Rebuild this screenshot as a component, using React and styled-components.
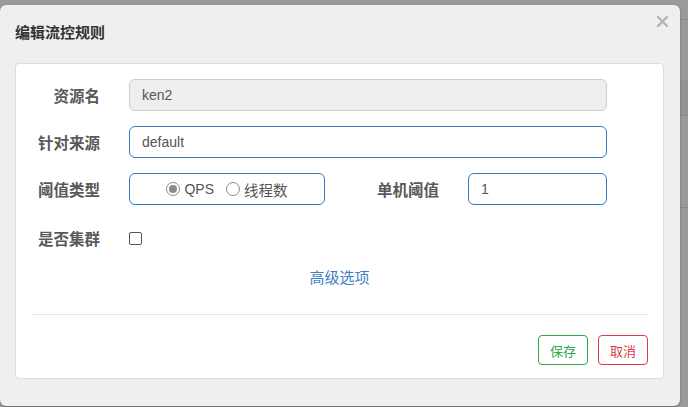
import React from 'react'
import styled, { createGlobalStyle } from 'styled-components'

const GlobalStyle = createGlobalStyle`
  html, body {
    margin: 0;
    padding: 0;
  }
  body {
    width: 688px;
    height: 407px;
    overflow: hidden;
    font-family: "Liberation Sans", "Noto Sans CJK SC", sans-serif;
    font-size: 14px;
    color: #555;
    background:
      linear-gradient(#8a8a8a, #8a8a8a) 0 19px / 100% 1px no-repeat,
      linear-gradient(#939393, #939393) 0 80px / 100% 35px no-repeat,
      linear-gradient(#8a8a8a, #8a8a8a) 0 115px / 100% 1px no-repeat,
      linear-gradient(#8a8a8a, #8a8a8a) 0 207px / 100% 1px no-repeat,
      #9a9a9a;
  }
`

function App() {
  return (
    <Backdrop>
      <GlobalStyle />
      <Dialog>
        <Header>
          <Title>编辑流控规则</Title>
          <Close aria-label="close">
            <svg width="11" height="11" viewBox="0 0 11 11">
              <path d="M1 1L10 10M10 1L1 10" stroke="#b3b3b3" strokeWidth="2.4" strokeLinecap="round" />
            </svg>
          </Close>
        </Header>

        <Panel>
          <Form>
            <Row>
              <Label>资源名</Label>
              <Input disabled value="ken2" readOnly />
            </Row>
            <Row>
              <Label>针对来源</Label>
              <Input value="default" readOnly />
            </Row>
            <Row $split>
              <Label>阈值类型</Label>
              <RadioBox>
                <RadioItem>
                  <Radio $checked />
                  QPS
                </RadioItem>
                <RadioItem>
                  <Radio />
                  <Cjk>线程数</Cjk>
                </RadioItem>
              </RadioBox>
              <Label>单机阈值</Label>
              <Input value="1" readOnly />
            </Row>
            <Row $check>
              <Label>是否集群</Label>
              <Checkbox />
            </Row>
            <MoreLink>高级选项</MoreLink>
          </Form>

          <Divider />

          <Footer>
            <Button $color="#2ea84a">保存</Button>
            <Button $color="#e03a4c">取消</Button>
          </Footer>
        </Panel>
      </Dialog>
    </Backdrop>
  )
}

export default App

const Backdrop = styled.div`
     padding-top: 5px;
`

const Dialog = styled.div`
     width: 680px;
     height: 401px;
     box-sizing: border-box;
     background: #efefef;
     border-radius: 6px;
     box-shadow: 0 1px 2px rgba(0,0,0,0.35);
     padding: 0 16px 0 15px;
`

const Header = styled.div`
     height: 58px;
     display: flex;
     justify-content: space-between;
     align-items: flex-start;
`

const Title = styled.h4`
     margin: 17px 0 0 0;
     font-size: 15px;
     line-height: 20px;
     font-weight: bold;
     color: #333;
     font-family: "Noto Sans CJK SC", sans-serif;
`

const Close = styled.button`
     margin: 11px -4px 0 0;
     padding: 0;
     border: none;
     background: none;
     width: 11px;
     height: 11px;
     display: flex;
     cursor: pointer;
`

const Panel = styled.div`
     background: #fff;
     border: 1px solid #ddd;
     border-radius: 4px;
     padding: 0 15px 13px 15px;
`

const Form = styled.div`
     padding: 15px 41px 0 0;
     display: flex;
     flex-direction: column;
`

const Row = styled.div`
     display: grid;
     grid-template-columns: ${p => p.$split ? '70px 196px 1fr 139px' : '70px 1fr'};
     column-gap: 28px;
     align-items: center;
     height: 32px;
     margin-bottom: 15px;
     margin-top: ${p => p.$check ? '2px' : '0'};
`

const Label = styled.label`
     text-align: right;
     font-weight: bold;
     font-size: 15.5px;
     color: #595959;
     font-family: "Noto Sans CJK SC", sans-serif;
     white-space: nowrap;
     margin-right: 1px;
`

const Input = styled.input`
     box-sizing: border-box;
     height: 32px;
     width: 100%;
     border: 1px solid #3a7bbd;
     border-radius: 6px;
     padding: 0 12px;
     font-family: "Liberation Sans", sans-serif;
     font-size: 14px;
     color: #555;
     background: #fff;
     outline: none;

     &:disabled {
          border-color: #ccc;
          background: #eee;
     }
`

const RadioBox = styled.div`
     box-sizing: border-box;
     height: 32px;
     border: 1px solid #3a7bbd;
     border-radius: 6px;
     display: flex;
     align-items: center;
     justify-content: center;
     gap: 12px;
`

const RadioItem = styled.span`
     display: flex;
     align-items: center;
     gap: 4px;
     font-size: 14px;
     color: #555;
`

const Cjk = styled.span`
     font-family: "Noto Sans CJK SC", sans-serif;
     font-size: 14.5px;
`

const Radio = styled.span`
     box-sizing: border-box;
     width: 14px;
     height: 14px;
     border-radius: 50%;
     border: 1px solid #8a8a8a;
     background: #fff;
     position: relative;
     display: inline-block;

     &::after {
          content: '';
          display: ${p => p.$checked ? 'block' : 'none'};
          position: absolute;
          left: 2px;
          top: 2px;
          width: 8px;
          height: 8px;
          border-radius: 50%;
          background: #8a8a8a;
     }
`

const Checkbox = styled.span`
     box-sizing: border-box;
     width: 13px;
     height: 13px;
     border: 1px solid #555;
     border-radius: 2px;
     background: #fff;
`

const MoreLink = styled.a`
     align-self: center;
     margin: -2px 0 0 41px;
     font-family: "Noto Sans CJK SC", sans-serif;
     font-size: 15px;
     line-height: 20px;
     color: #3d7fc4;
     cursor: pointer;
`

const Divider = styled.div`
     height: 1px;
     background: #e5e5e5;
     margin-top: 27px;
`

const Footer = styled.div`
     display: flex;
     justify-content: flex-end;
     gap: 10px;
     margin-top: 20px;
`

const Button = styled.button`
     box-sizing: border-box;
     width: 50px;
     height: 30px;
     border: 1px solid ${p => p.$color};
     border-radius: 4px;
     background: #fff;
     color: ${p => p.$color};
     font-family: "Noto Sans CJK SC", sans-serif;
     font-size: 13px;
     padding: 0;
     cursor: pointer;
`
